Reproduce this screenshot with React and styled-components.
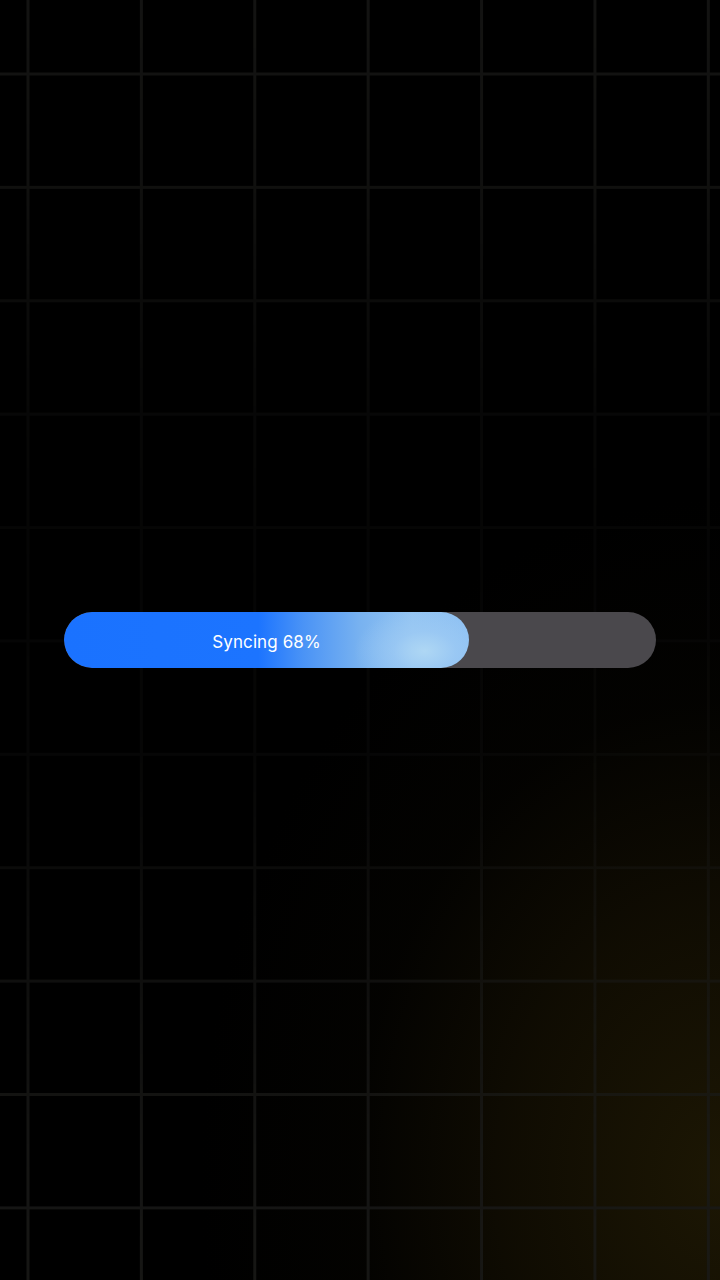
import React from "react";
import styled, { createGlobalStyle } from "styled-components";

const Global = createGlobalStyle`
  html, body { margin: 0; padding: 0; background: #000; }
  body { font-family: "Inter", "Noto Sans", sans-serif; }
  #root { min-height: 100vh; }
`;

const Screen = styled.main`
  position: relative;
  width: 720px;
  height: 1280px;
  overflow: hidden;
  background-color: #000;
  display: flex;
  align-items: flex-start;
  justify-content: center;
  padding-top: 612px;
  box-sizing: border-box;
`;

const Glow = styled.div`
  position: absolute;
  inset: 0;
  pointer-events: none;
  background: radial-gradient(ellipse 520px 680px at 100% 92%, rgba(30, 24, 4, 0.95) 0%, rgba(22, 17, 3, 0.7) 40%, rgba(10, 8, 2, 0.3) 70%, rgba(0, 0, 0, 0) 100%);
`;

const Grid = styled.div`
  position: absolute;
  inset: 0;
  pointer-events: none;
  background-image:
    linear-gradient(90deg, rgba(26, 26, 24, 1) 0, rgba(26, 26, 24, 1) 3px, transparent 3px),
    linear-gradient(180deg, rgba(26, 26, 24, 1) 0, rgba(26, 26, 24, 1) 3px, transparent 3px);
  background-size: 113.4px 113.4px, 113.4px 113.4px;
  background-position: 26.5px 0, 0 72.5px;
  -webkit-mask-image: linear-gradient(180deg, rgba(0,0,0,0.75) 0%, rgba(0,0,0,0.6) 15%, rgba(0,0,0,0.3) 30%, rgba(0,0,0,0.18) 45%, rgba(0,0,0,0.25) 60%, rgba(0,0,0,0.55) 75%, rgba(0,0,0,0.8) 90%, rgba(0,0,0,0.85) 100%);
  mask-image: linear-gradient(180deg, rgba(0,0,0,0.75) 0%, rgba(0,0,0,0.6) 15%, rgba(0,0,0,0.3) 30%, rgba(0,0,0,0.18) 45%, rgba(0,0,0,0.25) 60%, rgba(0,0,0,0.55) 75%, rgba(0,0,0,0.8) 90%, rgba(0,0,0,0.85) 100%);
`;

const Track = styled.div`
  position: relative;
  z-index: 1;
  width: 592px;
  height: 56px;
  border-radius: 28px;
  background: #4a484c;
  overflow: hidden;
  display: flex;
`;

const Fill = styled.div`
  height: 100%;
  border-radius: 28px;
  display: flex;
  align-items: center;
  justify-content: center;
  padding-top: 4px;
  box-sizing: border-box;
  background:
    radial-gradient(ellipse 70px 44px at 89% 70%, rgba(176, 216, 244, 0.95) 0%, rgba(160, 204, 244, 0.6) 45%, rgba(140, 190, 240, 0) 100%),
    linear-gradient(90deg, #1a72ff 0%, #1c74ff 48%, #4a93f6 59%, #78b2f0 73%, #93c4f2 86%, #8dc0f3 100%);
`;

const Label = styled.span`
  color: #ffffff;
  font-family: "Inter", "Noto Sans", sans-serif;
  font-size: 17px;
  font-weight: 400;
  letter-spacing: 0.1px;
  white-space: nowrap;
`;

export default function App() {
  const progress = 68;
  return (
    <>
      <Global />
      <Screen>
        <Glow />
        <Grid />
        <Track>
          <Fill style={{ width: `${(405 / 592) * 100}%` }}>
            <Label>Syncing {progress}%</Label>
          </Fill>
        </Track>
      </Screen>
    </>
  );
}
